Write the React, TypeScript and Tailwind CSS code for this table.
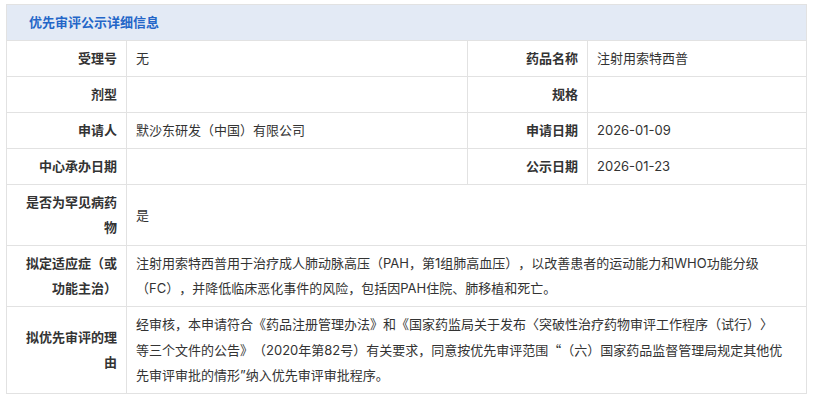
import React from "react";

const L = ({ children }: { children: React.ReactNode }) => (
  <td className="border border-[#e2e2e2] py-[5px] pl-[8px] pr-[9px] text-right align-middle font-bold text-[#333333] leading-[25px]">
    {children}
  </td>
);
const V = ({ children, colSpan }: { children?: React.ReactNode; colSpan?: number }) => (
  <td colSpan={colSpan} className="border border-[#e2e2e2] py-[5px] pl-[9px] pr-[8px] text-left align-middle text-[#333333] leading-[25px]">
    {children}
  </td>
);
const Ln = ({ children }: { children: React.ReactNode }) => (
  <span className="block whitespace-nowrap">{children}</span>
);

export default function App() {
  return (
    <div className="min-h-[401px] w-[814px] bg-white pt-[4px] pl-[6px] font-['Inter','Noto_Sans_CJK_SC',sans-serif] text-[13px] [text-spacing-trim:space-all]">
      <table className="w-[800px] table-fixed border-collapse">
        <colgroup>
          <col className="w-[120px]" />
          <col className="w-[341px]" />
          <col className="w-[120px]" />
          <col className="w-[219px]" />
        </colgroup>
        <tbody>
          <tr>
            <td colSpan={4} className="border border-[#e2e2e2] bg-[#e3eaf5] py-[5px] pl-[22px] font-bold leading-[25px] text-[#2466c8]">
              优先审评公示详细信息
            </td>
          </tr>
          <tr>
            <L>受理号</L>
            <V>无</V>
            <L>药品名称</L>
            <V>注射用索特西普</V>
          </tr>
          <tr>
            <L>剂型</L>
            <V />
            <L>规格</L>
            <V />
          </tr>
          <tr>
            <L>申请人</L>
            <V>默沙东研发（中国）有限公司</V>
            <L>申请日期</L>
            <V>2026-01-09</V>
          </tr>
          <tr>
            <L>中心承办日期</L>
            <V />
            <L>公示日期</L>
            <V>2026-01-23</V>
          </tr>
          <tr>
            <L>
              <Ln>是否为罕见病药</Ln>
              <Ln>物</Ln>
            </L>
            <V colSpan={3}>是</V>
          </tr>
          <tr>
            <L>
              <Ln>拟定适应症（或</Ln>
              <Ln>功能主治）</Ln>
            </L>
            <V colSpan={3}>
              <Ln>注射用索特西普用于治疗成人肺动脉高压（PAH，第1组肺高血压），以改善患者的运动能力和WHO功能分级</Ln>
              <Ln>（FC），并降低临床恶化事件的风险，包括因PAH住院、肺移植和死亡。</Ln>
            </V>
          </tr>
          <tr>
            <L>
              <Ln>拟优先审评的理</Ln>
              <Ln>由</Ln>
            </L>
            <V colSpan={3}>
              <Ln>经审核，本申请符合《药品注册管理办法》和《国家药监局关于发布〈突破性治疗药物审评工作程序（试行）〉</Ln>
              <Ln>
                等三个文件的公告》（2020年第82号）有关要求，同意按优先审评范围
                <span className="font-['Noto_Sans_CJK_SC',sans-serif]">“</span>
                （六）国家药品监督管理局规定其他优
              </Ln>
              <Ln>先审评审批的情形”纳入优先审评审批程序。</Ln>
            </V>
          </tr>
        </tbody>
      </table>
    </div>
  );
}
